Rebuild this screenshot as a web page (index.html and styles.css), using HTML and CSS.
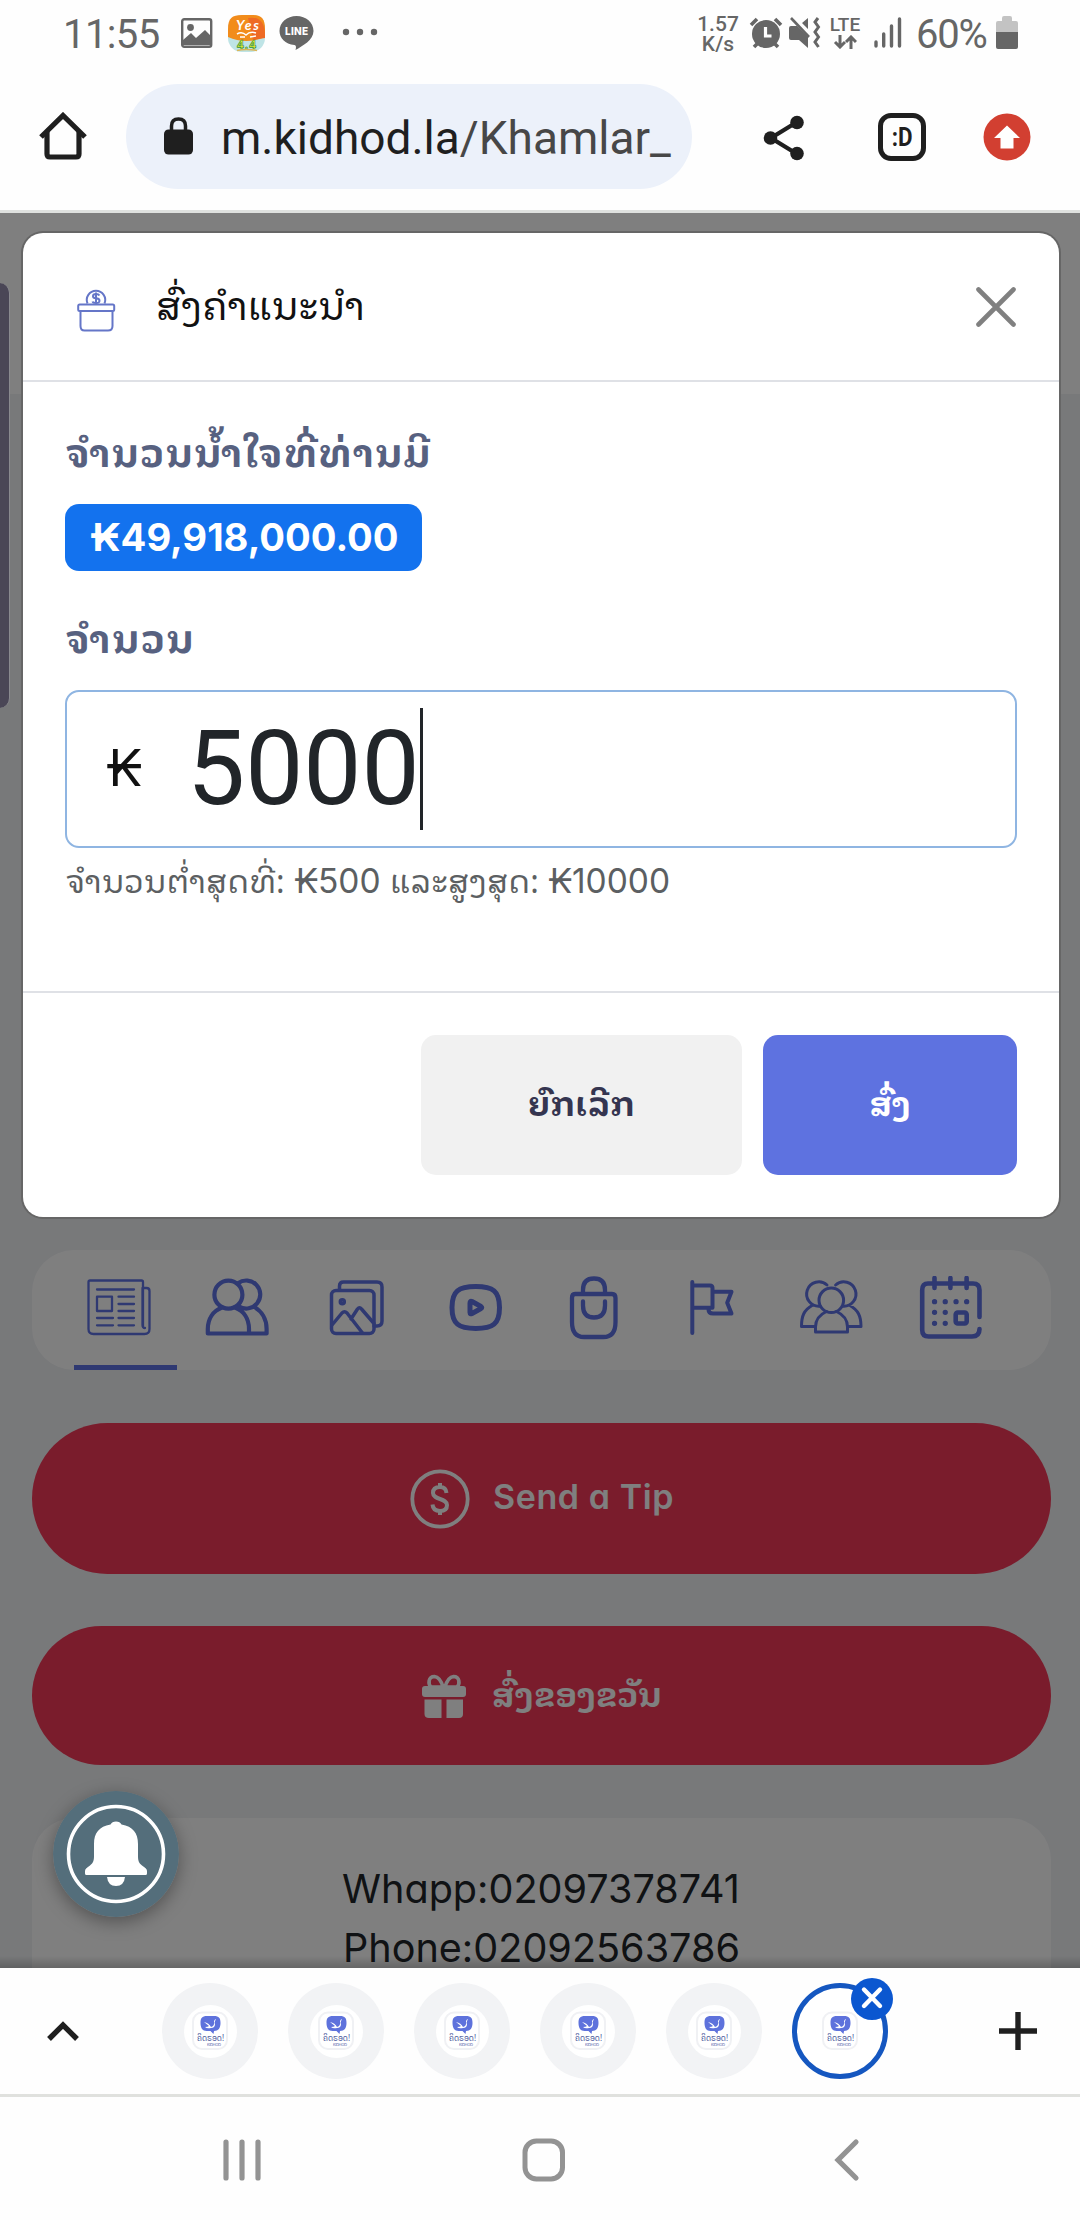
FILE: index.html
```html
<!DOCTYPE html>
<html lang="lo">
<head>
<meta charset="utf-8">
<title>Kidhod</title>
<link rel="stylesheet" href="styles.css">
</head>
<body>
<header class="status">
  <span class="clock">11:55</span>
  <svg class="st-photo" width="32" height="30" viewBox="0 0 32 30"><rect x="1.200" y="1.200" width="29" height="27.500" rx="2" fill="none" stroke="#666" stroke-width="2.400"/><path d="M2 22l8-7 5 5 9-8 7 7v8H2z" fill="#666"/><circle cx="9.500" cy="9.500" r="3.400" fill="#666"/></svg>
  <svg class="st-app" width="37" height="37" viewBox="0 0 37 37"><rect width="37" height="37" rx="14" fill="#bfe4e6"/><path d="M0 22V14C0 3 4 0 14 0h9c10 0 14 3 14 14v8Q18 30 0 22z" fill="#f28c1b"/><path d="M20 3q17-3 17 18v2l-12 2z" fill="#ee6a25"/><text x="8" y="15" class="app-yes" textLength="23">Yes</text><path d="M9 19q5-3 9 1 4-4 10-2M12 22h5M22 22l6-1" fill="none" stroke="#fff" stroke-width="1.500"/><text x="9" y="34" class="app-num" textLength="19">4.4</text><path d="M9 35.500q9-2 20 0" stroke="#d9b659" stroke-width="1.500" fill="none"/></svg>
  <svg class="st-line" width="35" height="34" viewBox="0 0 35 34"><path d="M17.500 0C27 0 34.500 6.500 34.500 15c0 9-11 15-18 19 1-3 .5-4.500-1-5C6 28 .5 22 .5 15 .5 6.500 8 0 17.500 0z" fill="#666"/><text x="6" y="19" class="line-word" textLength="23">LINE</text></svg>
  <svg class="st-dots" width="36" height="8" viewBox="0 0 36 8" fill="#666"><circle cx="4" cy="4" r="3.200"/><circle cx="18" cy="4" r="3.200"/><circle cx="32" cy="4" r="3.200"/></svg>
  <div class="speed"><span>1.57</span><span>K/s</span></div>
  <svg class="st-alarm" width="34" height="32" viewBox="0 0 34 32"><circle cx="17" cy="17" r="14" fill="#666"/><path d="M2 8l6-6M32 8l-6-6M5 30l4-4M29 30l-4-4" stroke="#666" stroke-width="3.600"/><path d="M16.500 10v9h6" fill="none" stroke="#fff" stroke-width="3.200"/></svg>
  <svg class="st-mute" width="32" height="32" viewBox="0 0 32 32"><path d="M0 11q0-2 2-2h6l11 11v11l-9-8H2q-2 0-2-2zM13 6l6-5v11z" fill="#666"/><path d="M2 1l18 19" stroke="#666" stroke-width="2.600"/><path d="M29 1l-3 4 3.500 5-3.500 5 3.500 5-3.500 5 3.500 5" fill="none" stroke="#666" stroke-width="3"/></svg>
  <div class="lte"><span>LTE</span><svg width="24" height="14" viewBox="0 0 24 14"><path d="M7 0v11M2 7l5 5 5-5M18 14V3M13 7l5-5 5 5" fill="none" stroke="#666" stroke-width="3"/></svg></div>
  <svg class="st-signal" width="28" height="31" viewBox="0 0 28 31"><path d="M2 25v4M9.700 17v12M17.500 9v20M25.500 2v27" stroke="#666" stroke-width="3.400" stroke-linecap="round"/></svg>
  <span class="pct">60%</span>
  <svg class="st-batt" width="22" height="33" viewBox="0 0 22 33"><path d="M0 16V7q0-2 2-2h4V2q0-2 2-2h6q2 0 2 2v3h4q2 0 2 2v9z" fill="#c3c3c3"/><path d="M0 16h22v15q0 2-2 2H2q-2 0-2-2z" fill="#666"/></svg>
</header>

<nav class="toolbar">
  <svg class="home" width="48" height="48" viewBox="0 0 48 48" fill="none" stroke="#1f1f1f"><path d="M8 20v22q0 3 3 3h26q3 0 3-3V20" stroke-width="5.200"/><path d="M2 25L24 3.500 46 25" stroke-width="5.200"/></svg>
  <div class="address">
    <svg width="29" height="38" viewBox="0 0 29 38"><rect y="12.500" width="29" height="25" rx="4.500" fill="#1f1f1f"/><path d="M7.500 14V9q0-7 7-7t7 7v5" fill="none" stroke="#1f1f1f" stroke-width="3.500"/></svg>
    <span class="url">m.kidhod.la<span class="path">/Khamlar_</span></span>
  </div>
  <svg class="share" width="42" height="46" viewBox="0 0 42 46"><path d="M34 7L8 23l26 16" fill="none" stroke="#1f1f1f" stroke-width="4.300"/><circle cx="34" cy="7.500" r="6.800" fill="#1f1f1f"/><circle cx="7.500" cy="23" r="6.800" fill="#1f1f1f"/><circle cx="34" cy="38.500" r="6.800" fill="#1f1f1f"/></svg>
  <div class="tabcount"><span>:D</span></div>
  <svg class="update" width="48" height="48" viewBox="0 0 48 48"><circle cx="24" cy="24" r="23.500" fill="#d23f31"/><path d="M24 12.500L37 25h-6.500v10.500h-13V25H11z" fill="#fff"/></svg>
</nav>

<main class="page">
  <div class="profile-head"></div>
  <div class="feed">
    <div class="tabs">
      <svg viewBox="0 0 64 64" stroke-width="2.300"><path d="M56 50V6q0-1.500-1.500-1.500H3Q1.500 4.500 1.500 6v47q0 5 5 5h51q5 0 5-5V15q0-3-3-3H56M55.500 12v37q0 3 2.500 3M10 13.500h37M31.500 20.700H47M31.500 28H47M31.500 35H47M31.500 42H47M31.500 49.300H47M10 42h16M10 49.300h16M10 20.700h15V35H10z"/></svg>
      <svg viewBox="0 0 64 64" stroke-width="4.200"><circle cx="23.400" cy="18.700" r="14"/><path d="M33 7.200A14 14 0 1 1 34 30.500M17 31.500C8 35 2.800 43 2.800 53v4.500h58.800V53c0-10-5-18-12.500-22M30 31.500C39 35 44 43 44 53v4.500"/></svg>
      <svg viewBox="0 0 64 64" stroke-width="3.500"><rect x="7.500" y="14.500" width="42.500" height="43" rx="4.500"/><path d="M15.500 14V10q0-4 4-4H53q5 0 5 5v34q0 5-5 5h-3M8 49l10-12q2.500-2.500 5 0l15.500 20M27 43l6.500-10q2-2.500 4 0L50 47.500"/><circle cx="18.300" cy="25.700" r="2"/></svg>
      <svg viewBox="0 0 64 64" stroke-width="5"><path d="M32.800 10.500C50 10.500 56.500 15 56.500 31.500S50 52.500 32.800 52.500 9 48 9 31.500s6.500-21 23.800-21zM27 27v9.500q0 2 2 1l9-5q1.500-1 0-2l-9-5q-2-1-2 1.500z"/></svg>
      <svg viewBox="0 0 64 64" stroke-width="4.300"><path d="M13 18h37q3.500 0 3.500 4v24q0 15-12 15H22Q10 61 10 46V22q0-4 3-4zM21 17v-3q0-11.500 11-11.500T43 14v3M21 25.500v4q0 12 11 12t11-12v-4"/></svg>
      <svg viewBox="0 0 64 64" stroke-width="4"><path d="M12.300 6v51M12.300 9.500H30q2.500 0 2.500 2.500v19.700H12.300M33 15.800h18.500l-4.300 11 4.300 10.800H33q-4.500 0-4.500-4"/></svg>
      <svg viewBox="0 0 64 64" stroke-width="3"><circle cx="32.300" cy="24.300" r="12.300"/><path d="M28 9A12.200 12.200 0 1 0 21 30.200M36.600 9a12.200 12.200 0 1 1 7 21.200M27.500 35.500q-11 5-11 15.500v5h32v-5q0-10.500-11-15.500M15 50.500H2.500C2.500 40 5 34 13 29.500M50 50.500h12C62 40 59 34 51 29.500"/></svg>
      <svg viewBox="0 0 64 64" stroke-width="4.600"><path d="M61.500 41V14q0-6.500-6.500-6.500H10Q4.200 7.500 4.200 14v40q0 6.500 6.500 6.500H54q7.500 0 7.500-7.500M16.500 2v10M32.400 2v10M48.600 2v10"/><rect x="37.700" y="36.500" width="11" height="11" rx="2"/><path d="M16.500 25.700h.1M27.200 25.700h.1M38 25.700h.1M48.600 25.700h.1M16.500 36.300h.1M27.200 36.300h.1M16.500 47.300h.1M27.200 47.300h.1" stroke-width="5.200"/></svg>
    </div>
    <div class="pill tip">
      <svg width="60" height="60" viewBox="0 0 60 60" fill="none" stroke="#fff"><circle cx="30" cy="30" r="27.700" stroke-width="3.800"/><path d="M36.500 24q-.5-6-6.500-6-7 0-7 6c0 7 14 5 14 12q0 6-7 6t-7.500-6.500M30 14v4M30 42v4" stroke-width="4"/></svg>
      <span>Send a Tip</span>
    </div>
    <div class="pill gift">
      <svg width="44" height="44" viewBox="0 0 44 44"><rect x="0" y="12" width="44" height="11" rx="3" fill="#fff"/><path d="M2.500 25.500H19.500V44H7q-4.500 0-4.500-4zM24.500 25.500h16.500V40q0 4-4 4H24.500z" fill="#fff"/><path d="M21 13q-3-10-8.500-10.500C6 2.500 6 10 9 13zM23 13q3-10 8.500-10.500C38 2.500 38 10 35 13z" fill="none" stroke="#fff" stroke-width="3.600"/></svg>
      <span>ສົ່ງຂອງຂວັນ</span>
    </div>
    <div class="about"><p class="l1">Whapp:02097378741</p><p class="l2">Phone:02092563786</p></div>
  </div>
  <div class="backdrop"></div>
  <div class="side"></div>
  <svg class="bell" width="126" height="126" viewBox="0 0 126 126"><circle cx="63" cy="63" r="63" fill="#546e7b"/><circle cx="63" cy="63" r="47.500" fill="none" stroke="#fff" stroke-width="3.600"/><path d="M63 30.500q4 0 5.500 3C80 35.500 85 42 85 53v12c0 5 1 7 4 9.500 3 2 5 3.500 5 5.500v2.500q0 1.500-1.500 1.500h-59q-1.500 0-1.500-1.500V80c0-2 2-3.500 5-5.500 3-2.500 4-4.500 4-9.500V53c0-11 5-17.500 16.500-19.500q1.500-3 5.500-3z" fill="#fff"/><path d="M54 86h18q-1 9-9 9t-9-9z" fill="#fff"/></svg>
  <section class="modal">
    <div class="modal-head">
      <svg width="40" height="44" viewBox="0 0 40 44" fill="none" stroke="#6576c8" stroke-width="2"><path d="M10.500 15.500a9.200 9.200 0 1 1 17 0"/><path d="M22.500 7.500q-1-1.500-3.500-1.500-3 0-3 2.200 0 2 3 2.100 3.500.2 3.500 2.500T19 15q-3 0-3.500-1.500M19 4.500v12"/><rect x="1.200" y="16.500" width="36" height="6.500" rx="1.500"/><path d="M3.500 23v15q0 4.500 4 4.500h23.500q4.500 0 4.500-4.500V23"/></svg>
      <h1>ສົ່ງຄຳແນະນຳ</h1>
      <svg class="close" width="40" height="40" viewBox="0 0 40 40"><path d="M2.500 2.500l35 35M37.500 2.500l-35 35" stroke="#808080" stroke-width="4.600" stroke-linecap="round"/></svg>
    </div>
    <div class="modal-body">
      <h2 class="have">ຈຳນວນນ້ຳໃຈທີ່ທ່ານມີ</h2>
      <div class="badge"><span>₭49,918,000.00</span></div>
      <h2 class="amount">ຈຳນວນ</h2>
      <div class="field"><span class="kip">₭</span><span class="value">5000</span><span class="caret"></span></div>
      <p class="hint"><span class="lo">ຈຳນວນຕ່ຳສຸດທີ່:</span> ₭500 <span class="lo">ແລະສູງສຸດ:</span> ₭10000</p>
    </div>
    <div class="modal-foot"><div class="btn cancel"><span>ຍົກເລີກ</span></div><div class="btn send"><span>ສົ່ງ</span></div></div>
  </section>
</main>

<div class="tabstrip">
  <svg class="up" width="32" height="22" viewBox="0 0 32 22"><path d="M2 19L16 5l14 14" fill="none" stroke="#1f1f1f" stroke-width="5.400"/></svg>
  <div class="group">
    <div class="site"><i><svg viewBox="0 0 36 40"><g id="favicon">
      <rect x="1" y="1.500" width="34" height="36.500" rx="9" fill="#fff" stroke="#f0f1f4" stroke-width="2"/>
      <path d="M15 5h7c5 0 6.500 2 6.500 7s-2 8-6.500 8l-.5 3-3-3h-4c-4 0-6-3-6-8s1.500-7 6.500-7z" fill="#5e72dc"/>
      <path d="M12 11q5 1 7 5 4-1 3-6 1-2 2-2-2 4-1 5 0 4-4 4-4 1-6-1 3 0 4-1z" fill="#fff"/>
      <text x="5" y="30" class="fav-name" textLength="27">ຄິດຮອດ!</text>
      <text x="15" y="35" class="fav-sub" textLength="14">KIDHOD</text>
    </g></svg></i></div>
    <div class="site"><i><svg viewBox="0 0 36 40"><use href="#favicon"/></svg></i></div>
    <div class="site"><i><svg viewBox="0 0 36 40"><use href="#favicon"/></svg></i></div>
    <div class="site"><i><svg viewBox="0 0 36 40"><use href="#favicon"/></svg></i></div>
    <div class="site"><i><svg viewBox="0 0 36 40"><use href="#favicon"/></svg></i></div>
    <div class="site active"><i><svg viewBox="0 0 36 40"><use href="#favicon"/></svg></i>
      <svg class="x" viewBox="0 0 42 42"><circle cx="21" cy="21" r="21" fill="#0b57d0"/><path d="M13 11.500l16 16.500M29 11.500L13 28" stroke="#fff" stroke-width="4.400" stroke-linecap="round"/></svg></div>
  </div>
  <svg class="plus" width="38" height="38" viewBox="0 0 38 38"><path d="M19 0v38M0 19h38" stroke="#1f1f1f" stroke-width="5.400"/></svg>
</div>
<footer class="sysnav">
  <svg width="40" height="44" viewBox="0 0 40 44"><path d="M4 4v36M20 4v36M36 4v36" stroke="#939393" stroke-width="5.200" stroke-linecap="round"/></svg>
  <svg width="44" height="44" viewBox="0 0 44 44"><rect x="3" y="3" width="37.500" height="38" rx="11.500" fill="none" stroke="#939393" stroke-width="5"/></svg>
  <svg width="26" height="44" viewBox="0 0 26 44"><path d="M22 4L4 22l18 18" fill="none" stroke="#939393" stroke-width="5.200" stroke-linecap="round"/></svg>
</footer>
</body>
</html>
```
FILE: styles.css
```css
* { box-sizing: border-box; }
body { margin: 0; width: 1080px; height: 2220px; display: flex; flex-direction: column; background: #fefefe; font-family: Inter, "DejaVu Sans", sans-serif; overflow: hidden; }
svg { display: block; flex: none; }
h1, h2, p { margin: 0; white-space: nowrap; }
span { white-space: nowrap; }

/* Status bar */
.status { flex: none; height: 66px; display: flex; align-items: flex-start; padding-left: 63px; font-family: Roboto, sans-serif; color: #666; }
.clock, .pct { font-size: 40px; line-height: 40px; padding-top: 15px; }
.clock { width: 118px; letter-spacing: -.6px; }
.st-photo { margin-top: 18px; margin-right: 15px; }
.st-app { margin-top: 15px; margin-right: 14px; }
.st-line { margin-top: 16px; margin-right: 28px; }
.st-dots { margin-top: 28px; }
.speed { margin-left: 319px; width: 42px; margin-top: 14px; display: flex; flex-direction: column; align-items: center; font-size: 21px; line-height: 20px; font-weight: 500; }
.st-alarm { margin: 17px 0 0 10px; }
.st-mute { margin: 17px 0 0 6px; }
.lte { margin: 14px 0 0 8px; width: 32px; display: flex; flex-direction: column; align-items: center; font-size: 19px; line-height: 21px; font-weight: 500; }
.st-signal { margin: 17px 0 0 13px; }
.pct { margin-left: 14px; width: 80px; letter-spacing: -1.200px; }
.st-batt { margin-top: 16px; }
.app-yes { font: italic 700 14px Lato, sans-serif; fill: #fff; }
.app-num { font: 700 12px "Open Sans", sans-serif; fill: #e8ec35; stroke: #2b8c3c; stroke-width: .6px; }
.line-word { font: 800 10px Inter, sans-serif; fill: #fff; }

/* Browser toolbar */
.toolbar { flex: none; height: 147px; display: flex; align-items: flex-start; border-bottom: 3px solid #dfe1df; padding: 18px 0 0 39px; }
.toolbar .home { margin-top: 28px; }
.address { margin-left: 39px; width: 566px; height: 105px; border-radius: 53px; background: #ecf1fa; display: flex; padding-left: 38px; align-items: center; }
.address svg { margin-top: -1px; }
.url { font-family: Roboto, sans-serif; font-size: 46px; line-height: 60px; padding: 3px 0 0 28px; color: #1f1f1f; }
.url .path { color: #474747; }
.share { margin: 31px 0 0 71px; }
.tabcount { margin: 29px 0 0 73px; width: 48px; height: 48px; border: 5px solid #1f1f1f; border-radius: 13px; display: flex; justify-content: center; font: 700 26px/38px Roboto, sans-serif; color: #1f1f1f; }
.tabcount span { transform: scaleX(.86); }
.update { margin: 29px 0 0 57px; }

/* Page under the dialog */
.page { flex: none; height: 1755px; position: relative; overflow: hidden; background: #f0f2f5; }
.profile-head { height: 181px; background: #fff; }
.feed { padding: 856px 29px 0 32px; display: flex; flex-direction: column; }
.tabs { height: 120px; border-radius: 42px; background: #fff; display: flex; padding: 26px 0 0 54.500px; gap: 54.750px; position: relative; }
.tabs svg { width: 64px; height: 64px; fill: none; stroke: #5e72e4; stroke-linecap: round; stroke-linejoin: round; }
.tabs::after { content: ""; position: absolute; left: 42px; bottom: 0; width: 103px; height: 5px; background: #5e72e4; }
.pill { background: #f43858; color: #fff; display: flex; align-items: center; }
.tip { margin-top: 53px; height: 151px; border-radius: 76px; padding-left: 378px; gap: 23px; font-size: 34px; letter-spacing: .6px; font-weight: 600; font-feature-settings: "cv11"; }
.tip span { padding-bottom: 5px; }
.gift { margin-top: 52px; height: 139px; border-radius: 70px; padding-left: 390px; gap: 26px; font-family: "Noto Sans Lao Looped", "Noto Sans Lao", sans-serif; font-size: 33px; letter-spacing: 0; font-weight: 700; }
.gift span { padding-bottom: 6px; }
.about { margin-top: 53px; height: 200px; border-radius: 42px 42px 0 0; background: #fff; padding-top: 42px; font-size: 39.600px; line-height: 59px; color: #212529; font-feature-settings: "cv11"; }
.l1 { padding-left: 310px; }
.l2 { padding-left: 311px; }
.backdrop { position: absolute; inset: 0; background: linear-gradient(transparent 1743px, rgba(0,0,0,.2) 1755px), rgba(0,0,0,.5); }
.side { position: absolute; left: 0; top: 70px; width: 10px; height: 425px; border-radius: 0 14px 14px 0; background: #4a4656; border-right: 1px solid #8a8a8f; }
.bell { position: absolute; left: 53px; top: 1578px; border-radius: 50%; box-shadow: 0 5px 18px rgba(0,0,0,.35); }

/* Dialog */
.modal { position: absolute; left: 23px; top: 20px; width: 1036px; height: 984px; border-radius: 20px; background: #fff; box-shadow: 0 0 0 2px #666; display: flex; flex-direction: column; }
.modal-head { height: 149px; border-bottom: 2px solid #dfe1e6; display: flex; align-items: center; padding: 0 43px 0 54px; }
.modal-head > svg:first-child { margin-top: 6px; }
.modal-head h1 { font: 400 38px/60px "Noto Sans Lao Looped", "Noto Sans Lao", sans-serif; color: #111; margin: 0 0 8px 39px; }
.close { margin-left: auto; }
.modal-body { height: 609px; padding: 38px 42px 0; }
h2 { font: 700 38px/60px "Noto Sans Lao Looped", "Noto Sans Lao", sans-serif; letter-spacing: 1.600px; color: #576180; }
.have { letter-spacing: 1.300px; padding-left: 1px; }
.badge { margin-top: 24px; width: 357px; height: 67px; border-radius: 14px; background: #1372ee; color: #fff; font-weight: 700; font-size: 38.200px; line-height: 66px; padding-left: 25px; }
.amount { margin-top: 35px; padding-left: 1px; }
.field { margin-top: 24px; height: 158px; border: 2px solid #8fb5e2; border-radius: 14px; display: flex; align-items: center; padding-left: 39px; }
.kip { font-size: 51px; width: 81px; color: #111; padding-bottom: 4px; }
.value { font: 400 103.500px/120px Roboto, sans-serif; color: #212529; }
.caret { width: 3px; height: 122px; background: #212529; }
.hint { font-size: 33.500px; line-height: 60px; color: #5c5f62; padding: 1px 0 0 1px; }
.lo { font-family: "Noto Sans Lao Looped", "Noto Sans Lao", sans-serif; font-size: 32px; letter-spacing: 0; }
.modal-foot { flex: 1; border-top: 2px solid #dfe1e6; padding: 42px; display: flex; justify-content: flex-end; gap: 21px; }
.btn { height: 140px; border-radius: 15px; display: flex; align-items: center; justify-content: center; font: 700 33px/40px "Noto Sans Lao Looped", "Noto Sans Lao", sans-serif; letter-spacing: .5px; padding-bottom: 6px; }
.cancel { width: 321px; background: #f1f1f1; color: #353550; }
.send { width: 254px; background: #5e72e0; color: #fff; letter-spacing: -.5px; }

/* Tab strip and system navigation */
.tabstrip { flex: none; height: 129px; border-bottom: 3px solid #e0e1de; display: flex; align-items: center; padding-left: 47px; }
.group { margin-left: 83px; width: 787px; display: flex; gap: 30px; }
.site { flex: none; position: relative; width: 96px; height: 96px; border-radius: 50%; background: #f2f3f5; display: flex; align-items: center; justify-content: center; }
.site i { width: 53px; height: 53px; border-radius: 50%; background: #fff; display: flex; align-items: center; justify-content: center; }
.site i svg { width: 36px; height: 40px; }
.active { background: #fff; border: 5px solid #1557c0; }
.x { position: absolute; width: 42px; height: 42px; right: -10px; top: -10px; }
.plus { margin-left: 50px; }
.fav-name { font: 400 8px "Noto Sans Lao", sans-serif; fill: #4c5a9c; }
.fav-sub { font: 400 4px "DejaVu Sans", sans-serif; fill: #5e6cb0; }
.sysnav { flex: 1; display: flex; align-items: flex-start; padding: 41px 0 0 222px; }
.sysnav svg + svg { margin-left: 260px; }
.sysnav svg:last-child { margin-left: 268px; }
```
